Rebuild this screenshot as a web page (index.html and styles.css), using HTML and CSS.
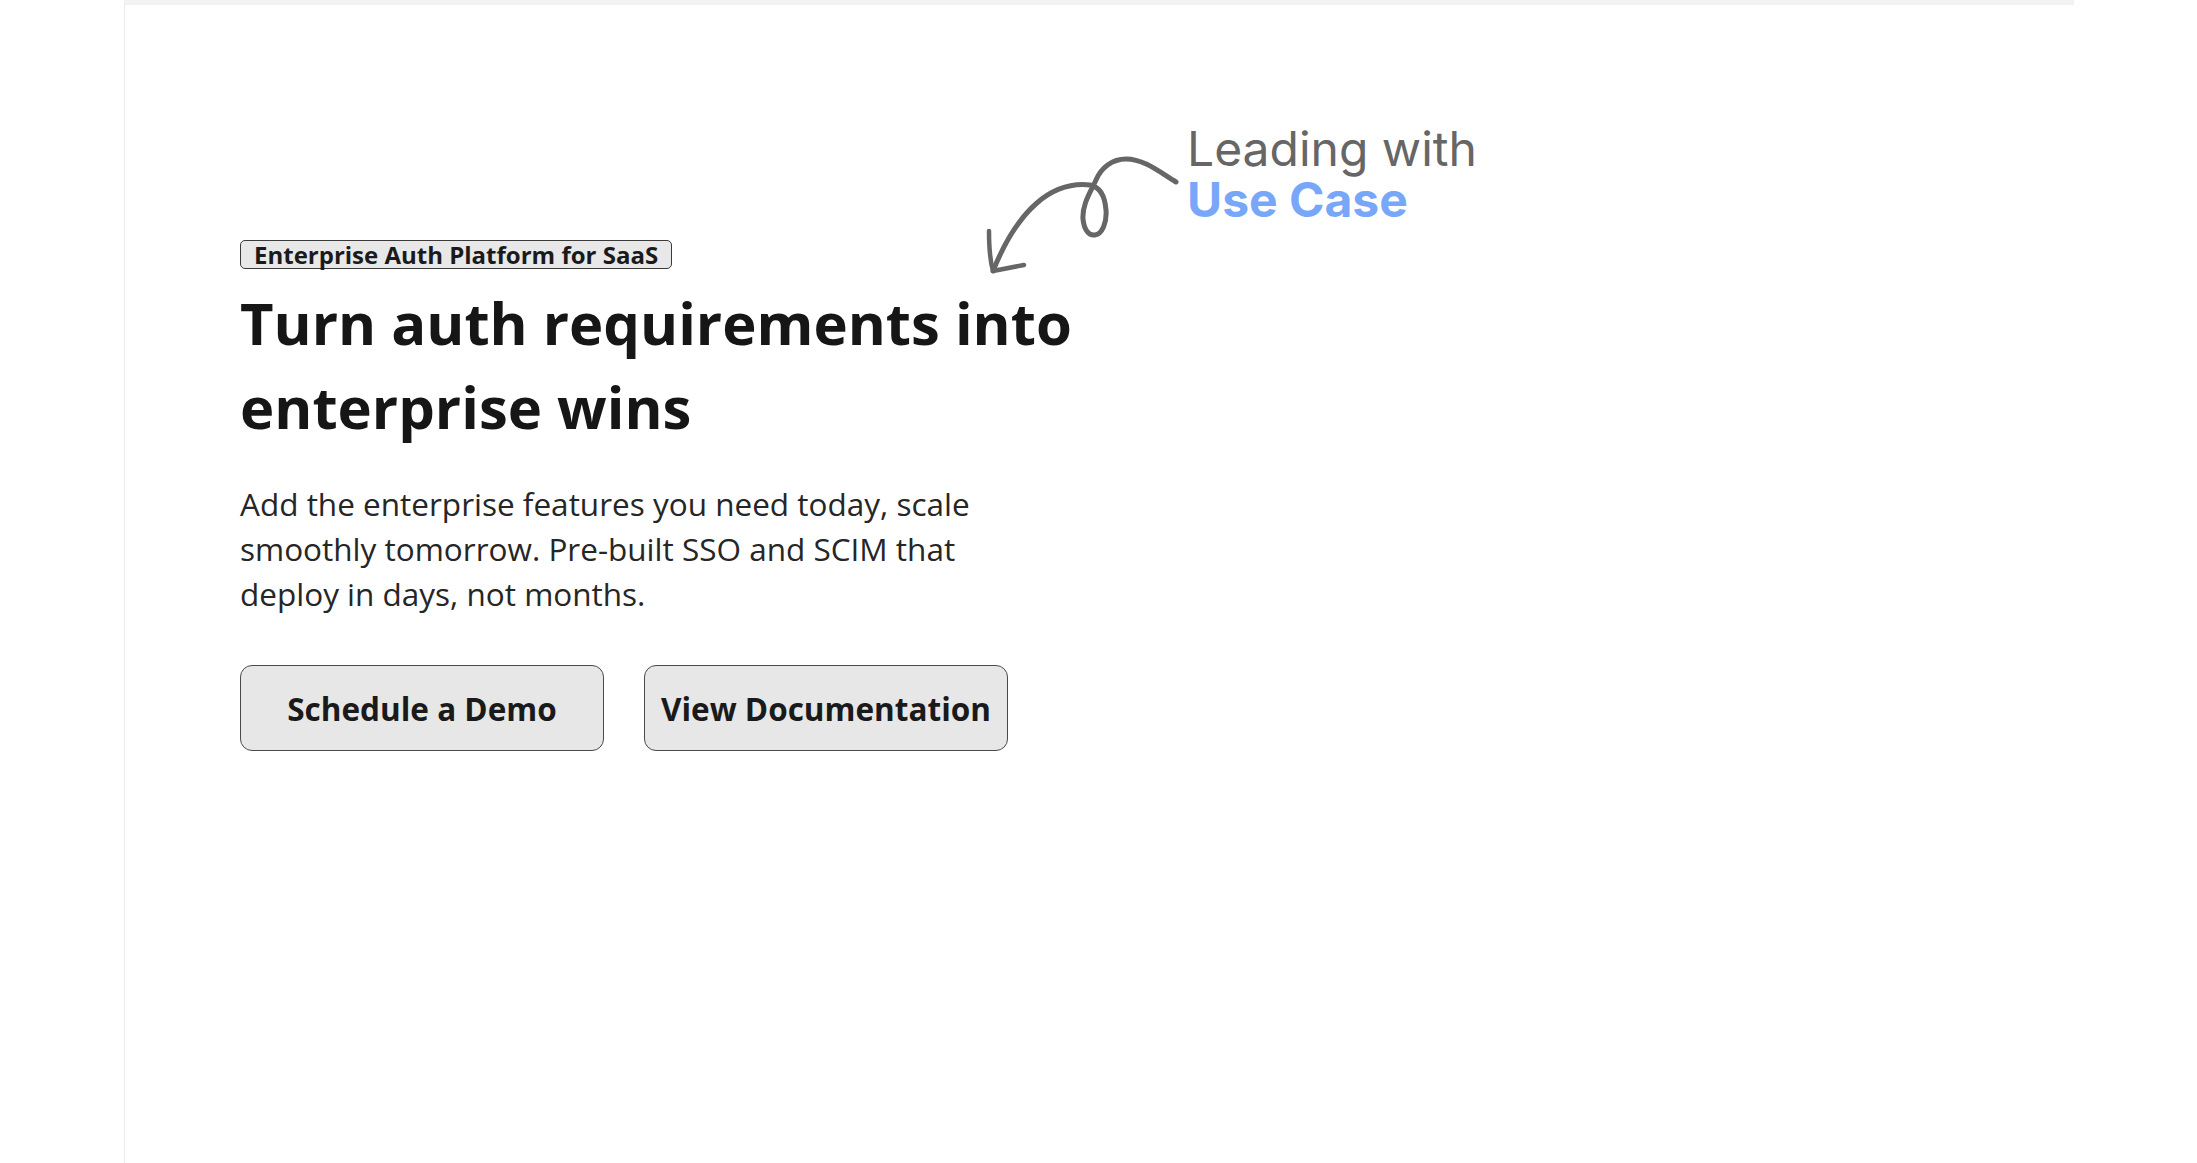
FILE: index.html
```html
<!DOCTYPE html>
<html lang="en">
<head>
<meta charset="utf-8">
<title>Enterprise Auth Platform for SaaS</title>
<link rel="stylesheet" href="styles.css">
</head>
<body>
<div class="page">
  <section class="hero">
    <span class="badge">Enterprise Auth Platform for SaaS</span>
    <h1 class="title">Turn auth requirements into enterprise wins</h1>
    <p class="lead">Add the enterprise features you need today, scale smoothly tomorrow. Pre-built SSO and SCIM that deploy in days, not months.</p>
    <div class="actions">
      <a class="btn" href="#">Schedule a Demo</a>
      <a class="btn" href="#">View Documentation</a>
    </div>
  </section>
  <div class="note">
    <svg class="note-arrow" width="210" height="135" viewBox="0 0 210 135" fill="none" stroke="#666" stroke-linecap="round" stroke-linejoin="round">
      <path d="M196,35 C182,27 165,12 146,12 C132,12 121,21 116,33 C110,46 102,58 103,72 C104,83 109,89 115,88 C122,87 127,76 126,63 C125,50 120,40 110,38 C72,34 38,62 13,124" stroke-width="5"/>
      <path d="M9,84 Q9,110 13,124 L44,118" stroke-width="4.5"/>
    </svg>
    <div class="note-text">
      <span class="note-line">Leading with</span>
      <span class="note-strong">Use Case</span>
    </div>
  </div>
</div>
</body>
</html>
```
FILE: styles.css
```css
html, body {
  margin: 0;
  padding: 0;
  background: #ffffff;
}

body {
  font-family: "Open Sans", "Noto Sans", "Liberation Sans", sans-serif;
  color: #1a1a1a;
}

.page {
  position: relative;
  margin-left: 124px;
  width: 1949px;
  min-height: 1158px;
  border-top: 5px solid #f2f2f2;
  border-left: 1px solid #ececec;
  box-sizing: content-box;
}

.hero {
  display: flex;
  flex-direction: column;
  align-items: flex-start;
  padding: 235px 0 0 115px;
}

.badge {
  display: block;
  font-size: 24px;
  font-weight: 700;
  line-height: 27px;
  padding: 0 13px;
  background: #e8e8e8;
  border: 1.5px solid #3a3a3a;
  border-radius: 5px;
  color: #1a1a1a;
}

.title {
  margin: 12px 0 0;
  font-size: 58px;
  font-weight: 700;
  line-height: 84px;
  max-width: 940px;
  color: #161616;
}

.lead {
  margin: 32px 0 0;
  font-size: 31.5px;
  font-weight: 400;
  line-height: 45px;
  max-width: 790px;
  color: #262626;
}

.actions {
  display: flex;
  gap: 40px;
  margin-top: 49px;
}

.btn {
  display: flex;
  align-items: center;
  justify-content: center;
  width: 364px;
  height: 86px;
  box-sizing: border-box;
  background: #e7e7e7;
  border: 1.5px solid #4a4a4a;
  border-radius: 12px;
  font-size: 31.5px;
  font-weight: 700;
  color: #1a1a1a;
  text-decoration: none;
}

.note {
  position: absolute;
  left: 855px;
  top: 118px;
  display: flex;
  align-items: flex-start;
}

.note-arrow {
  display: block;
  margin-top: 24px;
}

.note-text {
  display: flex;
  flex-direction: column;
  margin-left: -3px;
  font-family: "Inter", "Liberation Sans", sans-serif;
  font-size: 48px;
  line-height: 51px;
}

.note-line {
  color: #666666;
  font-weight: 400;
}

.note-strong {
  color: #78a7fa;
  font-weight: 700;
}
```
